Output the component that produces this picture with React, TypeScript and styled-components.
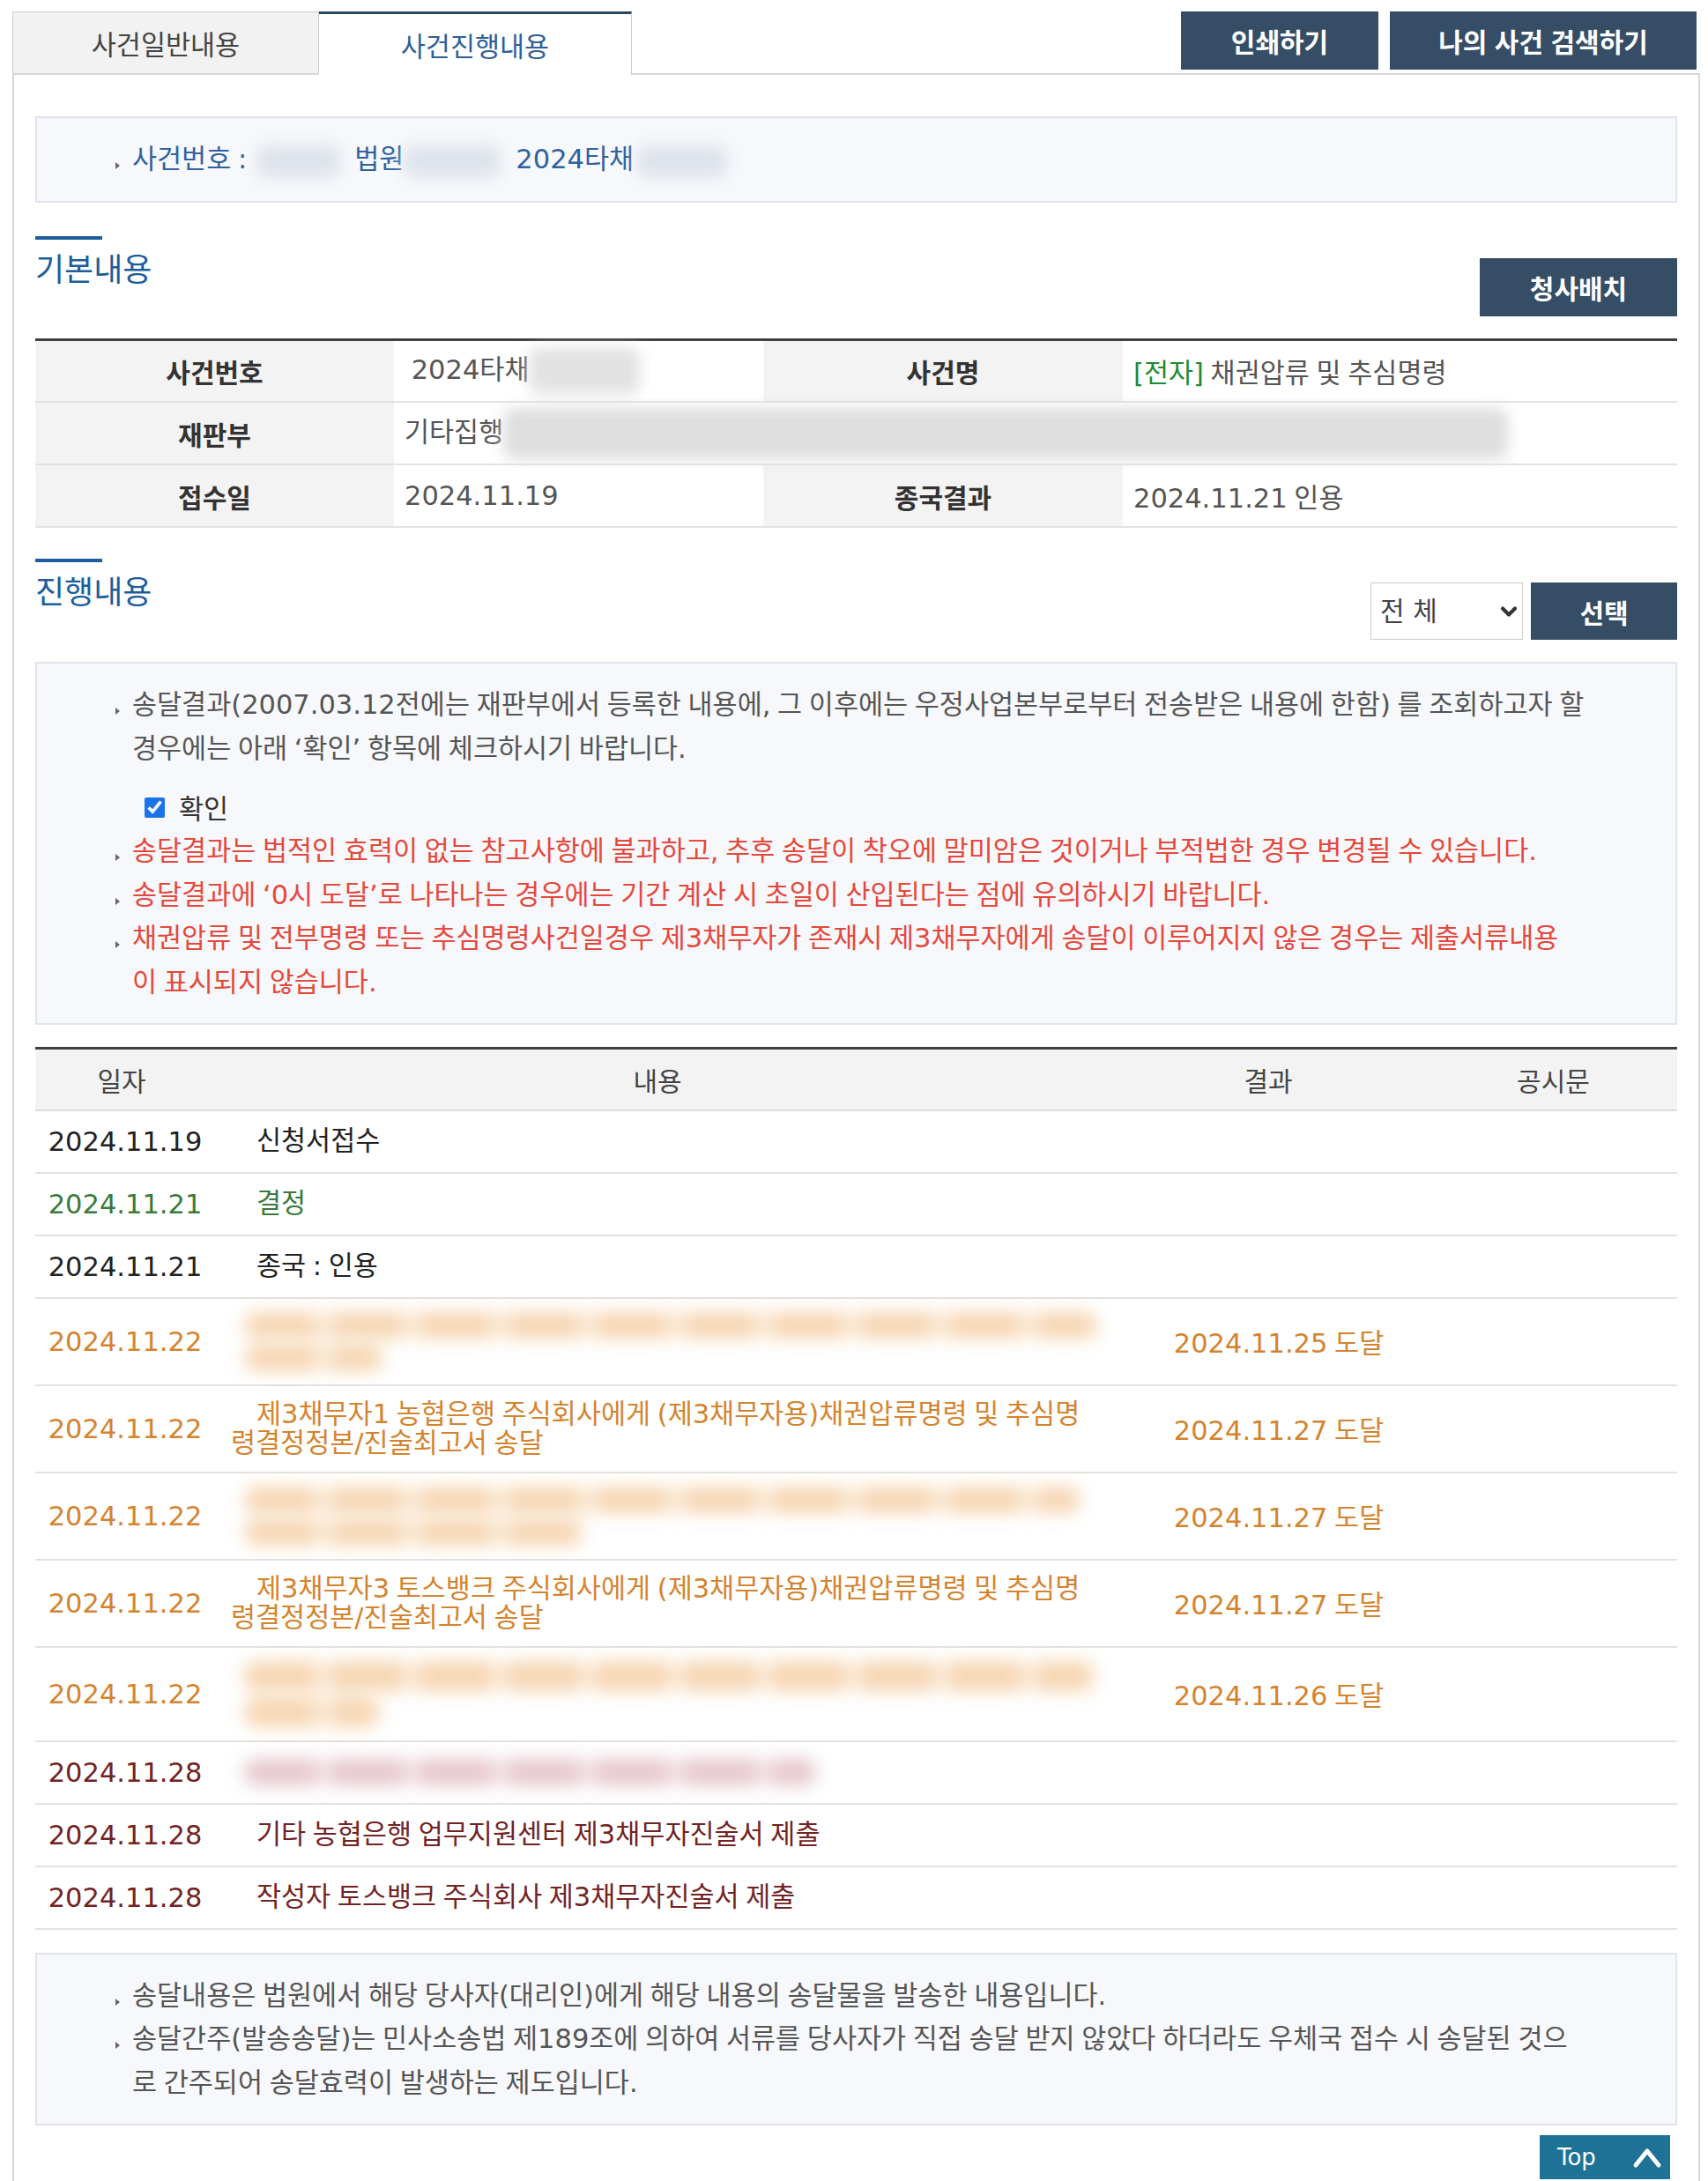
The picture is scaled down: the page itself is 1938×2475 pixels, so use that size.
import React from "react";
import styled, { createGlobalStyle, css } from "styled-components";
import { ChevronDown } from "lucide-react";

type Tone = "black" | "green" | "orange" | "maroon";
type NoteTone = "gray" | "red" | "blue";

const toneColor: Record<Tone, string> = {
  black: "#222222",
  green: "#3b7a3b",
  orange: "#d4832f",
  maroon: "#722323",
};

const noteColor: Record<NoteTone, string> = {
  gray: "#555555",
  red: "#e5483c",
  blue: "#2f62a0",
};

const GlobalStyle = createGlobalStyle`
  * { box-sizing: border-box; }
  html, body { margin: 0; padding: 0; background: #ffffff; }
  body {
    font-family: "DejaVu Sans", "Noto Sans CJK KR", sans-serif;
    font-size: 30.5px;
    word-spacing: -2px;
    color: #555555;
  }
`;

const Page = styled.div`
  padding: 13px 9px 0 14px;
`;

const TopBar = styled.div`
  display: flex;
  justify-content: space-between;
  align-items: flex-end;
`;

const Tabs = styled.div`
  display: flex;
`;

const Tab = styled.div<{ $active?: boolean; $width: number }>`
  width: ${({ $width }) => $width}px;
  height: 70px;
  display: flex;
  align-items: center;
  justify-content: center;
  border: 1px solid #cccccc;
  border-bottom: none;
  background: #f2f2f2;
  color: #444444;
  cursor: pointer;

  ${({ $active }) =>
    $active &&
    css`
      position: relative;
      z-index: 1;
      height: 72px;
      margin-bottom: -2px;
      border-top: 3px solid #2d4661;
      border-left: none;
      background: #ffffff;
      color: #2f5f99;
    `}
`;

const HeadButtons = styled.div`
  display: flex;
  gap: 13px;
  margin: 0 4px 4px 0;
`;

const DarkButton = styled.button<{ $width: number; $height?: number }>`
  width: ${({ $width }) => $width}px;
  height: ${({ $height }) => $height ?? 66}px;
  border: none;
  padding: 0;
  background: #354d65;
  color: #ffffff;
  font-family: inherit;
  font-size: 30px;
  font-weight: 700;
  word-spacing: -2px;
  cursor: pointer;
`;

const Panel = styled.div`
  border: 2px solid #d6d6d6;
  padding: 47px 24px 40px;
`;

const InfoBox = styled.div`
  background: #f7f8fb;
  border: 2px solid #e0e3e9;
  padding: 22px 40px 22px 89px;
`;

const Note = styled.p<{ $tone?: NoteTone }>`
  position: relative;
  margin: 0;
  padding-left: 19px;
  line-height: 49.5px;
  color: ${({ $tone }) => noteColor[$tone ?? "gray"]};

  &::before {
    content: "";
    position: absolute;
    left: 0;
    top: 28px;
    border-left: 5px solid #666666;
    border-top: 4px solid transparent;
    border-bottom: 4px solid transparent;
  }
`;

const Blur = styled.span<{ $w: number; $h?: number; $color?: string; $ml?: number; $mr?: number }>`
  display: inline-block;
  vertical-align: middle;
  width: ${({ $w }) => $w}px;
  height: ${({ $h }) => $h ?? 38}px;
  margin: 0 ${({ $mr }) => $mr ?? 0}px 0 ${({ $ml }) => $ml ?? 0}px;
  border-radius: 10px;
  background: ${({ $color }) => $color ?? "#dfe4ec"};
  filter: blur(8px);
`;

const SectionHead = styled.div<{ $gap: number }>`
  display: flex;
  justify-content: space-between;
  align-items: flex-start;
  margin-top: ${({ $gap }) => $gap}px;
`;

const SectionTitle = styled.h2`
  position: relative;
  margin: 0;
  padding-top: 18px;
  font-size: 36px;
  font-weight: 400;
  line-height: 42px;
  color: #1d5d9b;

  &::before {
    content: "";
    position: absolute;
    top: 0;
    left: 0;
    width: 76px;
    height: 4px;
    background: #1d5d9b;
  }
`;

const HeadTools = styled.div<{ $top?: number }>`
  display: flex;
  gap: 9px;
  margin-top: ${({ $top }) => $top ?? 25}px;
`;

const SelectWrap = styled.div`
  position: relative;
  width: 173px;
  height: 65px;
`;

const Select = styled.select`
  width: 100%;
  height: 100%;
  appearance: none;
  border: 1px solid #cccccc;
  border-radius: 0;
  background: #ffffff;
  padding: 0 0 0 10px;
  font-family: inherit;
  font-size: 30px;
  color: #444444;
`;

const SelectArrow = styled(ChevronDown)`
  position: absolute;
  right: 2px;
  top: 50%;
  transform: translateY(-50%);
  pointer-events: none;
`;

const Table = styled.table<{ $gap: number }>`
  width: 100%;
  margin-top: ${({ $gap }) => $gap}px;
  border-collapse: collapse;
  table-layout: fixed;
  border-top: 3px solid #3f3f3f;
`;

const Col = styled.col<{ $w?: number }>`
  width: ${({ $w }) => ($w ? `${$w}px` : "auto")};
`;

const LabelCell = styled.th`
  height: 71px;
  padding: 0;
  background: #f3f3f3;
  border-bottom: 2px solid #e2e2e2;
  color: #333333;
  font-size: 30px;
  font-weight: 600;
  text-align: center;
`;

const ValueCell = styled.td`
  height: 71px;
  padding: 0 12px;
  border-bottom: 2px solid #e2e2e2;
  color: #555555;
  white-space: nowrap;
`;

const Tag = styled.span`
  color: #1f8b2f;
`;

const HeadCell = styled.th`
  height: 70px;
  padding: 0;
  background: #f3f3f3;
  border-bottom: 2px solid #dedede;
  color: #444444;
  font-size: 30px;
  font-weight: 400;
  text-align: center;
`;

const DateCell = styled.td<{ $tone: Tone }>`
  padding: 15px 0 15px 8px;
  line-height: 39px;
  text-align: center;
  color: ${({ $tone }) => toneColor[$tone]};
  border-bottom: 2px solid #e2e2e2;
`;

const ContentCell = styled.td<{ $tone: Tone }>`
  padding: 15px 10px 15px 26px;
  line-height: 33.5px;
  text-indent: 29px;
  color: ${({ $tone }) => toneColor[$tone]};
  border-bottom: 2px solid #e2e2e2;
`;

const ResultCell = styled.td<{ $tone: Tone }>`
  padding: 15px 0 15px 24px;
  text-align: center;
  color: ${({ $tone }) => toneColor[$tone]};
  border-bottom: 2px solid #e2e2e2;
`;

const EmptyCell = styled.td`
  border-bottom: 2px solid #e2e2e2;
`;

const Smudge = styled.div`
  display: flex;
  flex-direction: column;
  gap: 7px;
  margin-left: 15px;
  text-indent: 0;
`;

const SmudgeLine = styled.span<{ $w: number; $color: string; $h?: number }>`
  display: block;
  width: ${({ $w }) => $w}px;
  height: ${({ $h }) => $h ?? 30}px;
  border-radius: 14px;
  background: repeating-linear-gradient(
    90deg,
    ${({ $color }) => $color} 0 80px,
    ${({ $color }) => $color}88 80px 100px
  );
  opacity: 0.75;
  filter: blur(10px);
`;

const CheckRow = styled.label`
  display: flex;
  align-items: center;
  gap: 16px;
  height: 50px;
  margin-top: 17px;
  padding-left: 33px;
  color: #333333;
`;

const Check = styled.input`
  width: 23px;
  height: 23px;
  margin: 0;
  accent-color: #1a73e8;
`;

const BottomBox = styled(InfoBox)`
  margin-top: 26px;
`;

const NoticeBox = styled(InfoBox)`
  margin-top: 25px;
`;

const TopRow = styled.div`
  display: flex;
  justify-content: flex-end;
  margin-top: 11px;
  padding-right: 8px;
`;

const TopButton = styled.button`
  display: flex;
  align-items: center;
  justify-content: space-between;
  width: 148px;
  height: 50px;
  padding: 0 9px 0 20px;
  border: none;
  background: #1d7295;
  color: #ffffff;
  font-family: inherit;
  font-size: 26px;
  cursor: pointer;
`;

type Entry = {
  date: string;
  tone: Tone;
  content?: React.ReactNode;
  smudge?: number[];
  smudgeHeight?: number;
  result?: string;
};

const SMUDGE_ORANGE = "#f3c898";
const SMUDGE_PINK = "#dcb3bb";

const entries: Entry[] = [
  { date: "2024.11.19", tone: "black", content: "신청서접수" },
  { date: "2024.11.21", tone: "green", content: "결정" },
  { date: "2024.11.21", tone: "black", content: "종국 : 인용" },
  { date: "2024.11.22", tone: "orange", smudge: [968, 157], result: "2024.11.25 도달" },
  {
    date: "2024.11.22",
    tone: "orange",
    content: (
      <>
        제3채무자1 농협은행 주식회사에게 (제3채무자용)채권압류명령 및 추심명
        <br />
        령결정정본/진술최고서 송달
      </>
    ),
    result: "2024.11.27 도달",
  },
  { date: "2024.11.22", tone: "orange", smudge: [948, 385], result: "2024.11.27 도달" },
  {
    date: "2024.11.22",
    tone: "orange",
    content: (
      <>
        제3채무자3 토스뱅크 주식회사에게 (제3채무자용)채권압류명령 및 추심명
        <br />
        령결정정본/진술최고서 송달
      </>
    ),
    result: "2024.11.27 도달",
  },
  { date: "2024.11.22", tone: "orange", smudge: [964, 153], smudgeHeight: 34, result: "2024.11.26 도달" },
  { date: "2024.11.28", tone: "maroon", smudge: [649] },
  { date: "2024.11.28", tone: "maroon", content: "기타 농협은행 업무지원센터 제3채무자진술서 제출" },
  { date: "2024.11.28", tone: "maroon", content: "작성자 토스뱅크 주식회사 제3채무자진술서 제출" },
];

const TopChevron = () => (
  <svg width="34" height="26" viewBox="0 0 34 26" fill="none">
    <polyline
      points="4,22 17,6 30,22"
      stroke="#ffffff"
      strokeWidth="5"
      strokeLinecap="round"
      strokeLinejoin="round"
    />
  </svg>
);

const App: React.FC = () => (
  <>
    <GlobalStyle />
    <Page>
      <TopBar>
        <Tabs>
          <Tab $width={348}>사건일반내용</Tab>
          <Tab $width={355} $active>
            사건진행내용
          </Tab>
        </Tabs>
        <HeadButtons>
          <DarkButton $width={224}>인쇄하기</DarkButton>
          <DarkButton $width={348}>나의 사건 검색하기</DarkButton>
        </HeadButtons>
      </TopBar>

      <Panel>
        <InfoBox>
          <Note $tone="blue">
            사건번호 :<Blur $w={95} $ml={11} $mr={16} />
            법원
            <Blur $w={110} $mr={17} />
            2024타채
            <Blur $w={102} $ml={4} />
          </Note>
        </InfoBox>

        <SectionHead $gap={38}>
          <SectionTitle>기본내용</SectionTitle>
          <HeadTools>
            <DarkButton $width={224}>청사배치</DarkButton>
          </HeadTools>
        </SectionHead>

        <Table $gap={25}>
          <colgroup>
            <Col $w={407} />
            <Col $w={419} />
            <Col $w={408} />
            <Col />
          </colgroup>
          <tbody>
            <tr>
              <LabelCell>사건번호</LabelCell>
              <ValueCell>
                {"\u00a0"}2024타채
                <Blur $w={126} $h={52} $color="#e2e2e2" />
              </ValueCell>
              <LabelCell>사건명</LabelCell>
              <ValueCell>
                <Tag>[전자]</Tag> 채권압류 및 추심명령
              </ValueCell>
            </tr>
            <tr>
              <LabelCell>재판부</LabelCell>
              <ValueCell colSpan={3}>
                기타집행
                <Blur $w={1140} $h={58} $color="#dedede" />
              </ValueCell>
            </tr>
            <tr>
              <LabelCell>접수일</LabelCell>
              <ValueCell>2024.11.19</ValueCell>
              <LabelCell>종국결과</LabelCell>
              <ValueCell>2024.11.21 인용</ValueCell>
            </tr>
          </tbody>
        </Table>

        <SectionHead $gap={35}>
          <SectionTitle>진행내용</SectionTitle>
          <HeadTools $top={27}>
            <SelectWrap>
              <Select defaultValue="all">
                <option value="all">전 체</option>
                <option value="hearing">기일</option>
                <option value="delivery">명령</option>
              </Select>
              <SelectArrow size={28} strokeWidth={3.5} color="#333333" />
            </SelectWrap>
            <DarkButton $width={166} $height={65}>
              선택
            </DarkButton>
          </HeadTools>
        </SectionHead>

        <NoticeBox>
          <Note>
            송달결과(2007.03.12전에는 재판부에서 등록한 내용에, 그 이후에는 우정사업본부로부터 전송받은 내용에 한함) 를 조회하고자 할
            <br />
            경우에는 아래 ‘확인’ 항목에 체크하시기 바랍니다.
          </Note>
          <CheckRow>
            <Check type="checkbox" defaultChecked />
            확인
          </CheckRow>
          <Note $tone="red">
            송달결과는 법적인 효력이 없는 참고사항에 불과하고, 추후 송달이 착오에 말미암은 것이거나 부적법한 경우 변경될 수 있습니다.
          </Note>
          <Note $tone="red">송달결과에 ‘0시 도달’로 나타나는 경우에는 기간 계산 시 초일이 산입된다는 점에 유의하시기 바랍니다.</Note>
          <Note $tone="red">
            채권압류 및 전부명령 또는 추심명령사건일경우 제3채무자가 존재시 제3채무자에게 송달이 이루어지지 않은 경우는 제출서류내용
            <br />이 표시되지 않습니다.
          </Note>
        </NoticeBox>

        <Table $gap={25}>
          <colgroup>
            <Col $w={196} />
            <Col $w={1020} />
            <Col $w={366} />
            <Col />
          </colgroup>
          <thead>
            <tr>
              <HeadCell>일자</HeadCell>
              <HeadCell>내용</HeadCell>
              <HeadCell>결과</HeadCell>
              <HeadCell>공시문</HeadCell>
            </tr>
          </thead>
          <tbody>
            {entries.map((entry, i) => (
              <tr key={i}>
                <DateCell $tone={entry.tone}>{entry.date}</DateCell>
                <ContentCell $tone={entry.tone}>
                  {entry.smudge ? (
                    <Smudge>
                      {entry.smudge.map((w, j) => (
                        <SmudgeLine
                          key={j}
                          $w={w}
                          $h={entry.smudgeHeight}
                          $color={entry.tone === "maroon" ? SMUDGE_PINK : SMUDGE_ORANGE}
                        />
                      ))}
                    </Smudge>
                  ) : (
                    entry.content
                  )}
                </ContentCell>
                <ResultCell $tone={entry.tone}>{entry.result}</ResultCell>
                <EmptyCell />
              </tr>
            ))}
          </tbody>
        </Table>

        <BottomBox>
          <Note>송달내용은 법원에서 해당 당사자(대리인)에게 해당 내용의 송달물을 발송한 내용입니다.</Note>
          <Note>
            송달간주(발송송달)는 민사소송법 제189조에 의하여 서류를 당사자가 직접 송달 받지 않았다 하더라도 우체국 접수 시 송달된 것으
            <br />로 간주되어 송달효력이 발생하는 제도입니다.
          </Note>
        </BottomBox>

        <TopRow>
          <TopButton>
            Top
            <TopChevron />
          </TopButton>
        </TopRow>
      </Panel>
    </Page>
  </>
);

export default App;
